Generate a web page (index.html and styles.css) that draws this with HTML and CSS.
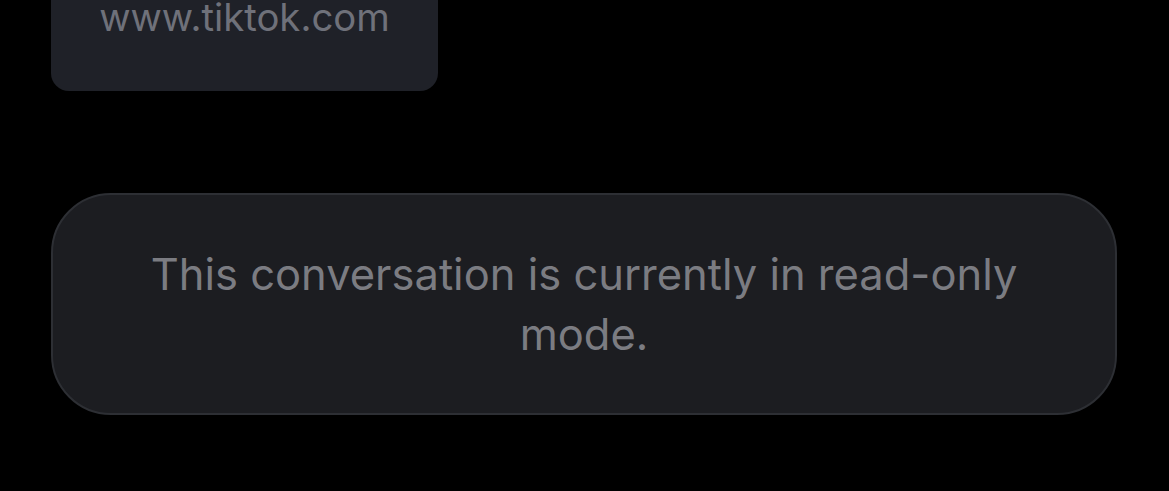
FILE: index.html
```html
<!DOCTYPE html>
<html>
<head>
    <meta charset="utf-8">
    <link rel="stylesheet" href="styles.css">
</head>
<body>
    <div class="thread">
        <div class="link-card">
            <span class="link-domain">www.tiktok.com</span>
        </div>

        <div class="readonly-notice">
            This conversation is currently in read-only mode.
        </div>
    </div>
</body>
</html>
```

FILE: styles.css
```css
body {
    margin: 0;
    background: #000;
    font-family: Inter, "Noto Sans", sans-serif;
    overflow: hidden;
}

.thread {
    display: flex;
    flex-direction: column;
    align-items: flex-start;
    padding: 0 52px 0 51px;
}

.link-card {
    width: 387px;
    margin-top: -16px;
    padding: 0 0 40px;
    background: #1f2128;
    border-radius: 0 0 18px 18px;
    text-align: center;
    box-sizing: border-box;
}

.link-domain {
    display: block;
    font-size: 38.3px;
    line-height: 67px;
    color: #6f717a;
}

.readonly-notice {
    align-self: stretch;
    margin-top: 102px;
    padding: 49px 90px 49px;
    background: #1c1d21;
    border: 2px solid #2d2f34;
    border-radius: 60px;
    text-align: center;
    font-size: 43.5px;
    line-height: 60px;
    color: #7b7c82;
}
```
